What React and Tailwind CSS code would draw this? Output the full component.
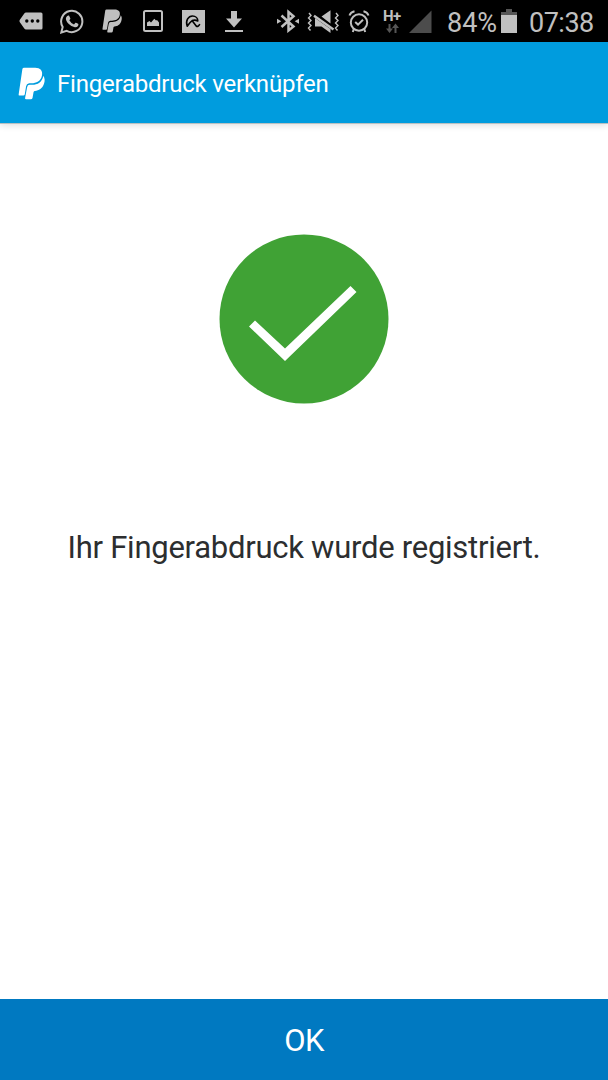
import React from "react";

function PayPalIcon({ className }) {
  return (
    <svg className={className} viewBox="0 0 80 98" preserveAspectRatio="none" fill="currentColor">
      <path d="M13 6Q14 2 18 2H51C66 2 74 11 71 25C68 42 54 48 40 48H33Q25 49 24 57L20 82Q19 85 16 85H4Q1 85 2 81Z" />
      <path d="M75 26C80 33 80 42 77 50C72 65 62 70 50 71Q47 71 46 75L43 92Q42 96 38 96H24Q20 96 21 92L27 60Q28 53 35 53H42C58 53 72 45 75 26Z" />
    </svg>
  );
}

// Notifications on the left side of the status bar
function NotificationIcons() {
  return (
    <>
      <svg className="ml-[19px] h-[18px] w-6" viewBox="0 0 24 18">
        <path d="M7 .5H22Q23.5.5 23.5 2V16Q23.5 17.5 22 17.5H7Q6 17.5 5.3 16.5L.7 10Q.2 9 .7 8L5.3 1.5Q6 .5 7 .5Z" fill="currentColor" />
        <g fill="#000">
          <circle cx="7.8" cy="9" r="1.7" />
          <circle cx="13.3" cy="9" r="1.7" />
          <circle cx="18.8" cy="9" r="1.7" />
        </g>
      </svg>
      <svg className="ml-[17px] h-[25px] w-6" viewBox="0 0 24 25" fill="none">
        <path d="M2.7 18A10.6 10.6 0 1 1 6.7 21.8L1.3 23.5Z" stroke="currentColor" strokeWidth="2" />
        <path d="M7.2 7.1Q8 6.2 9 6.6L10.4 9.5Q10.4 10.2 9.3 11.3Q11 14.4 14 15.5L15.4 13.8Q16 13.4 18.4 14.9Q18.7 17.8 15.3 18.3Q12.5 18.6 8.8 15Q4.9 11 6.2 8.2Z" fill="currentColor" />
      </svg>
      <PayPalIcon className="ml-[18px] h-6 w-5" />
      <svg className="ml-[21px] h-[22px] w-5" viewBox="0 0 20 22">
        <rect x="1" y="1" width="18" height="20" rx="1.5" fill="none" stroke="currentColor" strokeWidth="2" />
        <path d="M4 16V12.5L6.5 11L8 12.5L11.3 8.7L13 10.5L14 10L16 12.5V16Z" fill="currentColor" />
      </svg>
      <svg className="ml-[19px] h-6 w-6" viewBox="0 0 24 24" fill="none">
        <path d="M0 1H23V24H0Z" fill="currentColor" />
        <path d="M5.2 17.2C3.2 11.5 6.5 7 10.5 7C13.8 7 15.8 9.2 15.8 12C13.8 10.9 12.2 10.8 10.2 11.6C8.4 12.8 6.8 14.8 5.2 17.2ZM10.2 11.8L14.2 17Q16 18.4 17.8 15.2" stroke="#000" strokeWidth="1.6" strokeLinejoin="round" />
      </svg>
      <svg className="ml-[19px] h-[22px] w-[18px]" viewBox="0 0 18 22" fill="currentColor">
        <path d="M6 1H12V8.5H17L9 17.5L1 8.5H6ZM0 20H18V22H0Z" />
      </svg>
    </>
  );
}

function SystemIcons() {
  return (
    <>
      <svg className="ml-[34px] h-6 w-[22px]" viewBox="0 0 22 24" fill="none">
        <path d="M4.5 6.5L16.5 17.5L11.5 21.5V3L16.5 7.2L4.5 18" stroke="currentColor" strokeWidth="2.5" />
        <path d="M0 9.7L4.3 12.2L0 14.7ZM22 9.7L17.7 12.2L22 14.7Z" fill="currentColor" />
      </svg>
      <svg className="ml-2 h-6 w-[33px]" viewBox="0 0 33 24" fill="none">
        <path d="M2 4L4 6.5L1.5 9L4 11.5L1.5 14L4 16.5L1.5 19L3.5 21.5M29 4L31 6.5L28.5 9L31 11.5L28.5 14L31 16.5L28.5 19L30.5 21.5" stroke="currentColor" strokeWidth="1.4" />
        <path d="M14.5 7.5L23.5 1.2V14.5ZM8 9L23.5 20V24L14.5 17.5H8Z" fill="currentColor" />
        <path d="M7 6.8L26.5 20.6" stroke="currentColor" strokeWidth="2.4" />
      </svg>
      <svg className="ml-2 h-6 w-[22px]" viewBox="0 0 22 24" fill="none" stroke="currentColor" strokeWidth="2">
        <circle cx="11" cy="13.5" r="8.2" />
        <path d="M1.5 6.5Q2.5 3.2 6.5 2.2M15.5 2.2Q19.5 3.2 20.5 6.5M5.8 20.2L4.8 23M16.2 20.2L17.2 23M7.2 13L10 15.6L15 10.8" />
      </svg>
      {/* Network type with the up/down arrows below it */}
      <div className="ml-[13px] flex h-6 w-[19px] flex-col">
        <span className="h-[14px] text-[15px] leading-[14px] font-bold tracking-[-0.5px]">H+</span>
        <svg className="ml-[3px] h-[10px] w-[13px] text-[#555]" viewBox="0 0 13 10" fill="currentColor">
          <path d="M2.5 1H4.5V5.5H7L3.5 10L0 5.5H2.5ZM8.5 10H10.5V5H13L9.5 .5L6 5H8.5Z" />
        </svg>
      </div>
      <svg className="ml-[7px] h-6 w-[23px] text-[#4c4c4c]" viewBox="0 0 23 24" fill="currentColor">
        <path d="M22.5 1.5V24H0Z" />
      </svg>
    </>
  );
}

function StatusBar() {
  return (
    <div className="flex h-[42px] shrink-0 items-center overflow-hidden bg-black text-[#c0c0c0] [&>svg]:shrink-0">
      <NotificationIcons />
      <SystemIcons />
      <span className="ml-[15px] w-[50px] pt-[5px] text-[27px] leading-none whitespace-nowrap">84%</span>
      <svg className="ml-[4px] h-6 w-4" viewBox="0 0 16 24">
        <path d="M5 0H11V3H16V6H0V3H5Z" fill="#555" />
        <path d="M0 6H16V24H0Z" fill="currentColor" />
      </svg>
      <span className="ml-3 pt-[5px] text-[27px] leading-none tracking-[-0.5px] whitespace-nowrap">07:38</span>
    </div>
  );
}

export default function App() {
  return (
    <div className="flex h-[1080px] w-[608px] flex-col bg-white font-[Roboto,sans-serif]">
      <StatusBar />

      {/* App header */}
      <header className="flex h-[82px] shrink-0 items-center border-b border-[#b9c1c2] bg-[#009cde] text-white shadow-[0_1px_7px_rgba(0,0,0,0.14)]">
        <PayPalIcon className="mt-px ml-[18px] h-[33px] w-[27px]" />
        <h1 className="ml-3 pt-[3px] text-[24px] leading-none tracking-[-0.22px] whitespace-nowrap">
          Fingerabdruck verknüpfen
        </h1>
      </header>

      <main className="flex flex-1 flex-col items-center pt-[110px]">
        <svg className="size-[170px]" viewBox="0 0 170 170">
          <circle cx="85" cy="85" r="84.5" fill="#40a235" />
          <path d="M30 92.5L36 86.5L66 114.5L131.5 52L137.5 58L66 127Z" fill="#fff" />
        </svg>
        <p className="mt-[127px] text-[31px] leading-[34px] tracking-[-0.26px] whitespace-nowrap text-[#2c2e2f]">
          Ihr Fingerabdruck wurde registriert.
        </p>
      </main>

      <button className="h-[81px] shrink-0 bg-[#0079c1] pt-[2px] text-[31px] leading-none tracking-[-0.6px] text-white">
        OK
      </button>
    </div>
  );
}
